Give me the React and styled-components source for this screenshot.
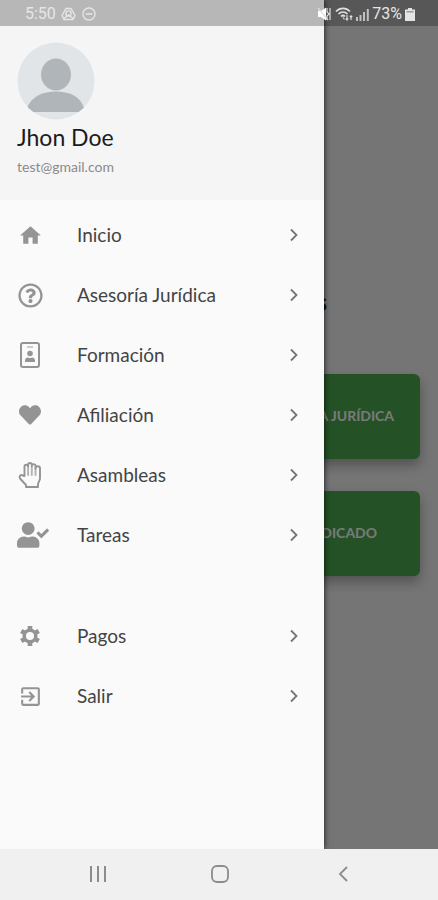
import React from "react"
import styled, { createGlobalStyle } from "styled-components"
import { MdExitToApp, MdHome, MdRemoveCircleOutline } from "react-icons/md"
import { FaHeart, FaRegQuestionCircle, FaUserCheck } from "react-icons/fa"

const BadgeIcon = ({ size }) => (
  <svg width={size} height={size} viewBox="0 0 26 26" fill="none">
    <rect
      x="4"
      y="1"
      width="18"
      height="24"
      rx="2"
      stroke="currentColor"
      strokeWidth="2"
    />
    <path d="M10 5h6" stroke="currentColor" strokeOpacity="0.6" strokeWidth="1.5" />
    <circle cx="13" cy="11.5" r="2.8" fill="currentColor" />
    <path
      d="M8 20v-1.500c0-2 1.500-3 3-3 1.300.7 2.700.7 4 0 1.500 0 3 1 3 3V20z"
      fill="currentColor"
    />
  </svg>
)

const HandIcon = ({ size }) => (
  <svg
    width={size}
    height={size}
    viewBox="0 0 26 26"
    fill="none"
    stroke="currentColor"
    strokeWidth="1.9"
    strokeLinejoin="round"
    strokeLinecap="round"
  >
    <path d="M7.500 14V4.500a1.800 1.800 0 0 1 3.600 0V2.800a1.800 1.800 0 0 1 3.700 0V4a1.800 1.800 0 0 1 3.700 0V6.500a2.200 2.200 0 0 1 4.500 0V17l-2 5v3H9v-2L3 16.500c-1.400-2 .8-4.300 2.800-3z" />
    <path d="M11.100 4.500V13M14.800 4v9M18.500 6.500V13" strokeOpacity="0.7" />
  </svg>
)

const GearIcon = ({ size }) => (
  <svg
    width={size}
    height={size}
    viewBox="0 0 24 24"
    fill="none"
    stroke="currentColor"
  >
    <circle cx="12" cy="12" r="6.300" strokeWidth="3.800" />
    <path
      d="M12 1v4M12 19v4M2.470 6.500l3.470 2M18.060 15.500l3.470 2M2.470 17.500l3.470-2M18.060 8.500l3.470-2"
      strokeWidth="5"
    />
  </svg>
)

const mainLinks = [
  { label: "Inicio", icon: MdHome, size: 25 },
  { label: "Asesoría Jurídica", icon: FaRegQuestionCircle, size: 25 },
  { label: "Formación", icon: BadgeIcon, size: 26 },
  { label: "Afiliación", icon: FaHeart, size: 22 },
  { label: "Asambleas", icon: HandIcon, size: 26 },
  { label: "Tareas", icon: FaUserCheck, size: 32 },
]

const accountLinks = [
  { label: "Pagos", icon: GearIcon, size: 22 },
  { label: "Salir", icon: MdExitToApp, size: 25 },
]

const MenuSection = ({ links }) => (
  <MenuList>
    {links.map(({ label, icon: Icon, size }) => (
      <li key={label}>
        <MenuLink href="#">
          <IconSlot>
            <Icon size={size} />
          </IconSlot>
          <MenuLabel>{label}</MenuLabel>
          <svg width="8" height="14" viewBox="0 0 8 14" fill="none">
            <path d="M1 1.500 6.500 7 1 12.500" stroke="#757575" strokeWidth="1.800" />
          </svg>
        </MenuLink>
      </li>
    ))}
  </MenuList>
)

const App = () => {
  return (
    <Screen>
      <GlobalStyle />
      <Stage>
        <Home>
          <HomeTitle>Servicios</HomeTitle>
          <Actions>
            <ActionButton type="button">ASESORÍA JURÍDICA</ActionButton>
            <ActionButton type="button">MI SINDICADO</ActionButton>
          </Actions>
        </Home>
        <Backdrop />
        <Drawer>
          <Profile>
            <Avatar viewBox="0 0 78 78" role="img" aria-label="Jhon Doe">
              <defs>
                <clipPath id="avatar">
                  <circle cx="39" cy="39" r="38.5" />
                </clipPath>
              </defs>
              <g clipPath="url(#avatar)">
                <rect width="78" height="78" fill="#e1e5e8" />
                <ellipse cx="39" cy="32.500" rx="15" ry="16" fill="#afb5b8" />
                <path
                  d="M10 66C15 54 26 49.500 39 49.500s24 4.500 28 16.500l-2 4H13z"
                  fill="#afb5b8"
                />
              </g>
            </Avatar>
            <Name>Jhon Doe</Name>
            <Email>test@gmail.com</Email>
          </Profile>
          <Menu>
            <MenuSection links={mainLinks} />
            <MenuSection links={accountLinks} />
          </Menu>
        </Drawer>
        <StatusBar>
          <StatusGroup $gap={5}>
            <span>5:50</span>
            <svg width="15" height="14" viewBox="0 0 15 14" fill="none">
              <path
                d="M5 1.500h5l4 7-2 4H3l-2-4z"
                stroke="#e6e6e6"
                strokeWidth="1.500"
                strokeLinejoin="round"
              />
              <circle
                cx="7.500"
                cy="6.500"
                r="2.600"
                stroke="#e6e6e6"
                strokeWidth="1.400"
              />
              <path
                d="M3 11.500 7.500 8l4.500 3.500"
                stroke="#e6e6e6"
                strokeWidth="1.400"
              />
            </svg>
            <MdRemoveCircleOutline size={16} />
          </StatusGroup>
          <StatusGroup $gap={3}>
            <svg width="14" height="14" viewBox="0 0 14 14">
              <path d="M0 4h3l5-3.500v13L3 10H0z" fill="#fff" />
              <path
                d="M0 1l10 12M9 1v4l2 2-2 2v4M12 1v12"
                stroke="#e0e0e0"
                strokeWidth="1.200"
                fill="none"
              />
            </svg>
            <svg width="18" height="14" viewBox="0 0 18 14" fill="none">
              <path
                d="M1 4.500C5 .3 11 .3 15 4.500M3.500 7c2.600-2.600 6.400-2.600 9 0M6 9.500c1.200-1.200 2.800-1.200 4 0"
                stroke="#dedede"
                strokeWidth="1.700"
              />
              <path
                d="M8 10.500l1.500 2M12 8v5M10.800 11.500 12 13l1.200-1.500M16 13V9M14.800 10 16 8.800l1.200 1.200"
                stroke="#dedede"
                strokeWidth="1.200"
              />
            </svg>
            <svg width="13" height="13" viewBox="0 0 13 13">
              <path
                d="M0 9h2v4H0zM3.500 7h2v6h-2zM7 4h2v9H7zM10.800 1h2v12h-2z"
                fill="#c0c0c0"
              />
            </svg>
            <span>73%</span>
            <svg width="10" height="13" viewBox="0 0 10 13">
              <path d="M3 0h4v1.500h3V13H0V1.500h3z" fill="#e4e4e4" />
              <path d="M1.500 3h7v1.500h-7z" fill="#9a9a9a" />
            </svg>
          </StatusGroup>
        </StatusBar>
      </Stage>
      <SystemNav>
        <NavButton type="button" aria-label="Recientes">
          <svg width="18" height="18" viewBox="0 0 18 18">
            <path d="M2 1v16M9 1v16M16 1v16" stroke="#8c8c8c" strokeWidth="2" />
          </svg>
        </NavButton>
        <NavButton type="button" aria-label="Inicio">
          <svg width="20" height="20" viewBox="0 0 20 20" fill="none">
            <rect
              x="2"
              y="2"
              width="16"
              height="16"
              rx="5"
              stroke="#8c8c8c"
              strokeWidth="1.800"
            />
          </svg>
        </NavButton>
        <NavButton type="button" aria-label="Atrás">
          <svg width="12" height="18" viewBox="0 0 12 18" fill="none">
            <path d="M10 2 3 9l7 7" stroke="#8c8c8c" strokeWidth="1.800" />
          </svg>
        </NavButton>
      </SystemNav>
    </Screen>
  )
}

export default App

const GlobalStyle = createGlobalStyle`
  * {
    box-sizing: border-box;
  }
  body {
    margin: 0;
    font-family: Lato, "Noto Sans", sans-serif;
  }
  svg {
    display: block;
    flex-shrink: 0;
  }
`
const Screen = styled.div`
  display: flex;
  flex-direction: column;
  min-height: 100vh;
`
const Stage = styled.div`
  position: relative;
  flex: 1;
  display: flex;
  overflow: hidden;
  background: #f4f4f4;
`
const Home = styled.main`
  flex: 1;
  padding: 288px 18px 24px;
`
const HomeTitle = styled.h1`
  margin: 0;
  padding-right: 93px;
  font-size: 24px;
  line-height: 28px;
  text-align: right;
  color: #222;
`
const Actions = styled.div`
  display: grid;
  grid-template-columns: 1fr 1fr;
  gap: 32px;
  margin-top: 58px;
`
const ActionButton = styled.button`
  grid-column: 2;
  height: 85px;
  padding: 0 0 3px;
  border: 0;
  border-radius: 6px;
  background: #4caa50;
  box-shadow: 0 6px 12px rgba(0, 0, 0, 0.3);
  color: #fff;
  font-family: inherit;
  font-size: 14px;
  font-weight: bold;
`
const Backdrop = styled.div`
  position: absolute;
  inset: 0;
  background: rgba(0, 0, 0, 0.52);
`
const Drawer = styled.aside`
  position: absolute;
  top: 0;
  bottom: 0;
  left: 0;
  width: 74%;
  background: #fafafa;
  box-shadow: 0 0 6px rgba(0, 0, 0, 0.8);
`
const Profile = styled.header`
  height: 200px;
  padding: 42px 17px 0;
  background: #f5f5f5;
`
const Avatar = styled.svg`
  width: 78px;
  height: 78px;
`
const Name = styled.h2`
  margin: 2px 0 0;
  font-size: 23px;
  font-weight: 400;
  line-height: 30px;
  color: #1c1c1c;
`
const Email = styled.p`
  margin: 5px 0 0;
  font-size: 14px;
  line-height: 20px;
  color: #8a8a8a;
`
const Menu = styled.nav`
  display: flex;
  flex-direction: column;
  gap: 41px;
  padding-top: 5px;
`
const MenuList = styled.ul`
  margin: 0;
  padding: 0;
  list-style: none;
`
const MenuLink = styled.a`
  display: flex;
  align-items: center;
  height: 60px;
  padding: 0 26px 0 17px;
  color: #444;
  text-decoration: none;
`
const IconSlot = styled.span`
  display: flex;
  justify-content: safe center;
  width: 26px;
  margin-right: 34px;
  color: #949494;
`
const MenuLabel = styled.span`
  flex: 1;
  font-size: 19px;
  line-height: 24px;
`
const StatusBar = styled.div`
  position: absolute;
  top: 0;
  left: 0;
  right: 0;
  display: flex;
  justify-content: space-between;
  align-items: center;
  height: 26px;
  padding: 2px 23px 0 25px;
  background: rgba(0, 0, 0, 0.25);
  color: #e6e6e6;
  font-family: Roboto, sans-serif;
  font-size: 16px;
  line-height: 20px;
`
const StatusGroup = styled.div`
  display: flex;
  align-items: center;
  gap: ${({ $gap }) => $gap}px;
`
const SystemNav = styled.nav`
  display: flex;
  justify-content: space-around;
  align-items: center;
  height: 51px;
  padding: 0 34px 2px 37px;
  background: #f0f0f0;
`
const NavButton = styled.button`
  display: flex;
  justify-content: center;
  align-items: center;
  width: 48px;
  height: 40px;
  padding: 0;
  border: 0;
  background: none;
`
